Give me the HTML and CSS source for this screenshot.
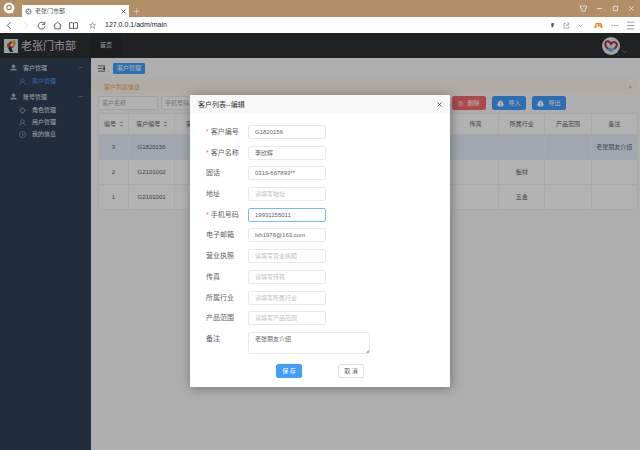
FILE: index.html
```html
<!DOCTYPE html>
<html lang="zh-CN">
<head>
<meta charset="utf-8">
<title>老张门市部</title>
<link rel="stylesheet" href="styles.css">
</head>
<body>
<svg class="defs" aria-hidden="true">
  <symbol id="person" viewBox="0 0 16 16"><circle cx="8" cy="5" r="4"/><path d="M1 15v-3q3-2 7-2t7 2v3z"/></symbol>
  <symbol id="user" viewBox="0 0 16 16"><circle cx="8" cy="5.500" r="4"/><path d="M2 15q0-4 4-6M14 15q0-4-4-6"/></symbol>
  <symbol id="cloud" viewBox="0 0 16 16"><path fill="currentColor" d="M4 14a4 4 0 0 1-1-7 5 5 0 0 1 10 0 4 4 0 0 1-1 7H9V9h2L8 6 5 9h2v5z"/></symbol>
</svg>
<div class="window">
  <div class="tabbar">
    <svg class="browser-logo" viewBox="0 0 22 22"><circle cx="11" cy="11" r="10" fill="#fff"/><path d="M13 18l6 3-1-6z" fill="#fff"/><circle cx="11" cy="10" r="5" fill="#a87b4d"/><path d="M8 12V9l3-2 3 2v2l-3 2z" fill="#fff"/></svg>
    <div class="tab">
      <svg class="i7" viewBox="0 0 16 16"><circle cx="8" cy="8" r="6"/><path d="M8 2v4M2 8h4M14 8h-4M8 14v-4"/></svg>
      <span>老张门市部</span>
      <button class="plain tab-close" aria-label="关闭标签"><svg class="i5" viewBox="0 0 10 10"><path d="M1 1l8 8M9 1L1 9"/></svg></button>
    </div>
    <button class="plain tab-add" aria-label="新标签"><svg class="i7" viewBox="0 0 16 16"><path d="M8 1v14M1 8h14"/></svg></button>
    <div class="win-buttons">
      <svg class="i7" viewBox="0 0 16 16"><path d="M1 2h4q3 3 6 0h4v5h-3v7H4V7H1z"/></svg>
      <svg class="i7" viewBox="0 0 16 16"><path d="M2 8h12"/></svg>
      <svg class="i7" viewBox="0 0 16 16"><path d="M3 3h10v10H3z"/></svg>
      <svg class="i7" viewBox="0 0 16 16"><path d="M3 3l10 10M13 3L3 13"/></svg>
    </div>
  </div>
  <div class="toolbar">
    <svg class="i9" viewBox="0 0 16 16"><path d="M10 2L4 8l6 6"/></svg>
    <svg class="i9 faint" viewBox="0 0 16 16"><path d="M6 2l6 6-6 6"/></svg>
    <svg class="i9" viewBox="0 0 16 16"><path d="M13 5a6 6 0 1 0 1 4M14 1v5H9"/></svg>
    <svg class="i9" viewBox="0 0 16 16"><path d="M1 8l7-6 7 6M3 7v7h10V7"/></svg>
    <svg class="i9" viewBox="0 0 16 16"><path d="M1 3h5l2 1 2-1h5v10h-5l-2 1-2-1H1zM8 4v10"/></svg>
    <svg class="i7 star" viewBox="0 0 16 16"><path d="M8 1l2 5h5l-4 3 2 6-5-4-5 4 2-6-4-3h5z"/></svg>
    <span class="url">127.0.0.1/adm/main</span>
    <div class="tools">
      <svg class="i5" viewBox="0 0 10 16"><path d="M3 1h6L7 6h2L3 15l1-7H1z" fill="#555"/></svg>
      <svg class="i7 gray" viewBox="0 0 16 16"><path d="M7 3H2v11h11V9M6 10q1-6 8-6M10 1l4 3-3 4"/></svg>
      <svg class="i5 gray" viewBox="0 0 10 10"><path d="M1 3l4 4 4-4"/></svg>
      <svg class="i9 game" viewBox="0 0 18 16"><path d="M4 3h10q3 2 3 10-2 2-5-3H6q-3 5-5 3Q1 5 4 3z" fill="#f58220"/><path d="M4 7h4M6 5v4M12 5v1M12 8v1" stroke="#fff"/></svg>
      <svg class="i7" viewBox="0 0 16 16"><path d="M1 8h3M7 8h3M13 8h3"/></svg>
      <svg class="i9 gray" viewBox="0 0 16 16"><path d="M2 2h13M2 8h13M2 14h13"/></svg>
    </div>
  </div>

  <div class="app">
    <header class="header">
      <svg class="logo" viewBox="0 0 14 14"><path d="M0 0h14v14H0z" fill="#d4ecec"/><path d="M3 5l4-3 4 1-1 5-4 2-3-2z" fill="#d1432b"/><path d="M7 2l4-1 1 4-3 2z" fill="#f0a33c"/><path d="M4 9l3-1 2 5H6z" fill="#273037"/><circle cx="8" cy="6" r="1.500" fill="#f5e6c8"/></svg>
      <span class="brand">老张门市部</span>
      <a class="home" href="#">首页</a>
      <svg class="avatar" viewBox="0 0 18 18"><circle cx="9" cy="9" r="9" fill="#dceef3"/><path d="M9 14Q1 9 4 5q3-2 5 2 3-4 6 0 0 3-3 5" fill="none" stroke="#c62742" stroke-width="2"/><path d="M5 12q4-3 8 0l-3 3z" fill="#6db8d8"/></svg>
      <svg class="i5 caret" viewBox="0 0 10 10"><path d="M1 3l4 4 4-4"/></svg>
    </header>
    <div class="body">
      <nav class="sidebar">
        <a class="group" href="#"><svg class="i7 solid"><use href="#person"/></svg><span>客户管理</span><i></i></a>
        <a class="item active" href="#"><svg class="i7"><use href="#user"/></svg>客户管理</a>
        <a class="group" href="#"><svg class="i7 solid"><use href="#person"/></svg><span>账号管理</span><i></i></a>
        <a class="item" href="#"><svg class="i7" viewBox="0 0 16 16"><circle cx="8" cy="8" r="5"/><path d="M8 0v3M8 13v3M0 8h3M13 8h3"/></svg>角色管理</a>
        <a class="item" href="#"><svg class="i7"><use href="#user"/></svg>用户管理</a>
        <a class="item" href="#"><svg class="i7" viewBox="0 0 16 16"><circle cx="8" cy="8" r="7"/><path d="M8 4v5h3"/></svg>我的信息</a>
      </nav>
      <main class="content">
        <div class="crumbs">
          <svg class="i7 fold" viewBox="0 0 16 16"><path d="M0 2h16M0 8h9M0 14h16"/><path d="M15 5v6l-4-3z" fill="currentColor"/></svg>
          <a class="crumb" href="#">客户管理</a>
        </div>
        <div class="notice"><span>客户列表信息</span><button class="plain" aria-label="关闭">×</button></div>
        <div class="filters">
          <input type="text" aria-label="客户名称" placeholder="客户名称">
          <input type="text" aria-label="手机号码" placeholder="手机号码">
          <div class="actions">
            <button class="btn danger"><svg class="i5" viewBox="0 0 16 16"><path d="M1 3h14M5 3V1h6v2M3 3v12h10V3M6 6v6M10 6v6"/></svg>删除</button>
            <button class="btn"><svg class="i7"><use href="#cloud"/></svg>导入</button>
            <button class="btn"><svg class="i7"><use href="#cloud"/></svg>导出</button>
          </div>
        </div>
        <table>
          <thead><tr><th class="first">编号<span class="sort"></span></th><th>客户编号<span class="sort"></span></th><th>客户名称</th><th>固话</th><th>地址</th><th>手机号码</th><th>电子邮箱</th><th>营业执照</th><th>传真</th><th>所属行业</th><th>产品范围</th><th>备注</th></tr></thead>
          <tbody>
            <tr class="current"><td>3</td><td>G1820156</td><td></td><td></td><td></td><td></td><td></td><td></td><td></td><td></td><td></td><td>老张朋友介绍</td></tr>
            <tr><td>2</td><td>G2101002</td><td></td><td></td><td></td><td></td><td></td><td></td><td></td><td>板材</td><td></td><td></td></tr>
            <tr><td>1</td><td>G2101001</td><td></td><td></td><td></td><td></td><td></td><td></td><td></td><td>五金</td><td></td><td></td></tr>
          </tbody>
        </table>
      </main>
    </div>
    <div class="overlay">
      <form class="dialog" role="dialog" aria-labelledby="dialog-title">
        <div class="dialog-head"><span id="dialog-title">客户列表--编辑</span><button type="button" class="plain" aria-label="关闭"><svg class="i5" viewBox="0 0 10 10"><path d="M1 1l8 8M9 1L1 9"/></svg></button></div>
        <div class="fields">
          <label class="required" for="code">客户编号</label><input id="code" type="text" value="G1820156">
          <label class="required" for="name">客户名称</label><input id="name" type="text" value="李欣辉">
          <label for="tel">固话</label><input id="tel" type="text" value="0319-667893**">
          <label for="addr">地址</label><input id="addr" type="text" placeholder="请填写地址">
          <label class="required" for="mobile">手机号码</label><input id="mobile" class="focused" type="text" value="19931155011">
          <label for="mail">电子邮箱</label><input id="mail" type="text" value="lxh1976@163.com">
          <label for="license">营业执照</label><input id="license" type="text" placeholder="请填写营业执照">
          <label for="fax">传真</label><input id="fax" type="text" placeholder="请填写传真">
          <label for="trade">所属行业</label><input id="trade" type="text" placeholder="请填写所属行业">
          <label for="range">产品范围</label><input id="range" type="text" placeholder="请填写产品范围">
          <label for="note">备注</label><textarea id="note">老张朋友介绍</textarea>
        </div>
        <div class="dialog-foot"><button type="button" class="btn">保 存</button><button type="button" class="btn outline">取 消</button></div>
      </form>
    </div>
  </div>
</div>
</body>
</html>
```
FILE: styles.css
```css
* { box-sizing: border-box; }
body { margin: 0; font: 6px/8px "Liberation Sans", "Noto Sans CJK SC", sans-serif; color: #606266; }
button, input, textarea { font: inherit; color: inherit; margin: 0; }
a { color: inherit; text-decoration: none; }
svg { flex: none; fill: none; stroke: currentColor; stroke-width: 1.5; }
.defs { position: absolute; width: 0; height: 0; }
.i5 { width: 5px; height: 5px; }
.i7 { width: 7px; height: 7px; }
.i9 { width: 9px; height: 9px; }
.plain { display: flex; align-items: center; padding: 0; border: 0; background: none; }
.window { display: flex; flex-direction: column; min-height: 100vh; }

.tabbar { display: flex; align-items: flex-end; height: 17px; background: #b38f68; color: #fff; }
.browser-logo { width: 12px; height: 12px; margin: 0 7px 3px 3px; stroke: none; }
.tab { display: flex; align-items: center; gap: 3px; width: 107px; height: 12px; padding: 0 3px; background: #fff; color: #555; }
.tab-close { margin-left: auto; color: #333; }
.tab-add { height: 12px; margin-left: 4px; color: #e5d5c3; }
.win-buttons { display: flex; align-items: center; gap: 9px; height: 17px; margin-left: auto; padding-right: 5px; }

.toolbar { display: flex; align-items: center; gap: 7px; height: 16px; padding: 0 5px; background: #fff; color: #444; }
.toolbar .faint { color: #ddd; }
.toolbar .star { margin-left: 4px; color: #888; }
.url { font-size: 7px; line-height: 10px; color: #222; margin-left: 2px; }
.tools { display: flex; align-items: center; gap: 8px; margin-left: auto; }
.tools .gray { color: #888; }
.tools .game { stroke: none; margin-left: 3px; }

.app { position: relative; display: flex; flex: 1; flex-direction: column; }
.header { display: flex; align-items: center; height: 25px; padding: 0 13px 0 4px; background: #2f3032; color: #dcdcdc; }
.logo { width: 14px; height: 14px; stroke: none; }
.brand { width: 73px; padding-left: 3px; font-size: 11px; line-height: 16px; color: #d0d3d8; }
.home { height: 25px; padding: 8px 9px; background: #292b2e; }
.avatar { width: 18px; height: 18px; margin-left: auto; stroke: none; }
.caret { margin: 12px 0 0 2px; color: #888; }
.body { display: flex; flex: 1; }
.sidebar { width: 91px; padding-top: 2px; background: #304156; color: #e4e9ef; }
.group { display: flex; align-items: center; gap: 6px; height: 15px; padding: 0 8px 0 10px; }
.group i { width: 4px; height: 1px; margin-left: auto; background: #60728a; }
.group .solid { fill: #aab3bd; stroke: none; }
.item { display: flex; align-items: center; gap: 6px; height: 12px; padding-left: 19px; }
.item svg { color: #a0acb8; }
.active, .active svg { color: #409eff; }
.active { margin-bottom: 2px; }
.content { flex: 1; min-width: 0; background: #fafafa; }
.crumbs { display: flex; align-items: center; gap: 8px; height: 20px; padding: 0 7px; }
.fold { color: #222; }
.crumb { padding: 1px 3px; border: 1px solid #409eff; background: #409eff; color: #fff; line-height: 7px; border-radius: 1px; }
.notice { display: flex; align-items: center; justify-content: space-between; height: 16px; margin: 0 2px; padding: 1px 6px 0 11px; background: #fdf6ec; color: #e6a23c; }
.notice .plain { color: #aaa; }
.filters { display: flex; gap: 3px; height: 14px; margin: 2px 7px 3px; }
.filters input { width: 60px; padding: 0 3px; border: 1px solid #e6e9f0; background: #fff; border-radius: 1px; }
.actions { display: flex; gap: 6px; margin-left: auto; padding-right: 67px; }
::placeholder { color: #bcc0c8; opacity: 1; }
.filters ::placeholder { color: #aaa; }
.btn { display: flex; align-items: center; justify-content: center; gap: 4px; width: 34px; height: 14px; padding: 0; border: 1px solid #409eff; border-radius: 2px; background: #409eff; color: #fff; }
.btn.danger { border-color: #f56c6c; background: #f56c6c; }
table { width: calc(100% - 9px); margin-left: 7px; table-layout: fixed; border-collapse: collapse; background: #fff; }
th, td { height: 25px; padding: 0; border: 1px solid #f0f2f5; text-align: center; font-weight: normal; white-space: nowrap; }
th { height: 21px; color: #606266; }
.first { width: 30px; }
.sort { display: inline-block; width: 3px; height: 4px; margin-left: 4px; border: solid #aaa; border-width: 1px 0; }
.current td { background: #e6f0fd; }

.overlay { position: absolute; inset: 0; display: flex; align-items: center; justify-content: center; padding-bottom: 1px; background: rgba(0, 0, 0, .3); }
.dialog { width: 260px; background: #fff; box-shadow: 1px 1px 12px rgba(0, 0, 0, .35); border-radius: 1px; }
.dialog-head { display: flex; align-items: center; justify-content: space-between; height: 19px; padding: 0 8px; background: #f8f8f8; color: #333; font-size: 7px; }
.fields { display: grid; grid-template-columns: 37px 1fr; column-gap: 5px; align-content: space-between; min-height: 240px; padding: 11px 80px 0 16px; }
.fields label { font-size: 7px; line-height: 14px; white-space: nowrap; }
.required::before { content: "* "; color: #f56c6c; }
.fields input { width: 78px; height: 14px; padding: 0 6px; border: 1px solid #e6e9f0; border-radius: 2px; background: #fff; }
.fields .focused { border-color: #79b8f5; }
.fields textarea { height: 22px; padding: 2px 6px; border: 1px solid #e6e9f0; border-radius: 2px; resize: vertical; overflow: hidden; }
textarea::-webkit-resizer { background: linear-gradient(135deg, transparent 88%, #bbb 88%); }
.dialog-foot { display: flex; gap: 36px; padding: 10px 0 9px 86px; }
.dialog-foot .btn { width: 26px; }
.btn.outline { border-color: #dcdfe6; background: #fff; color: #606266; }
```
